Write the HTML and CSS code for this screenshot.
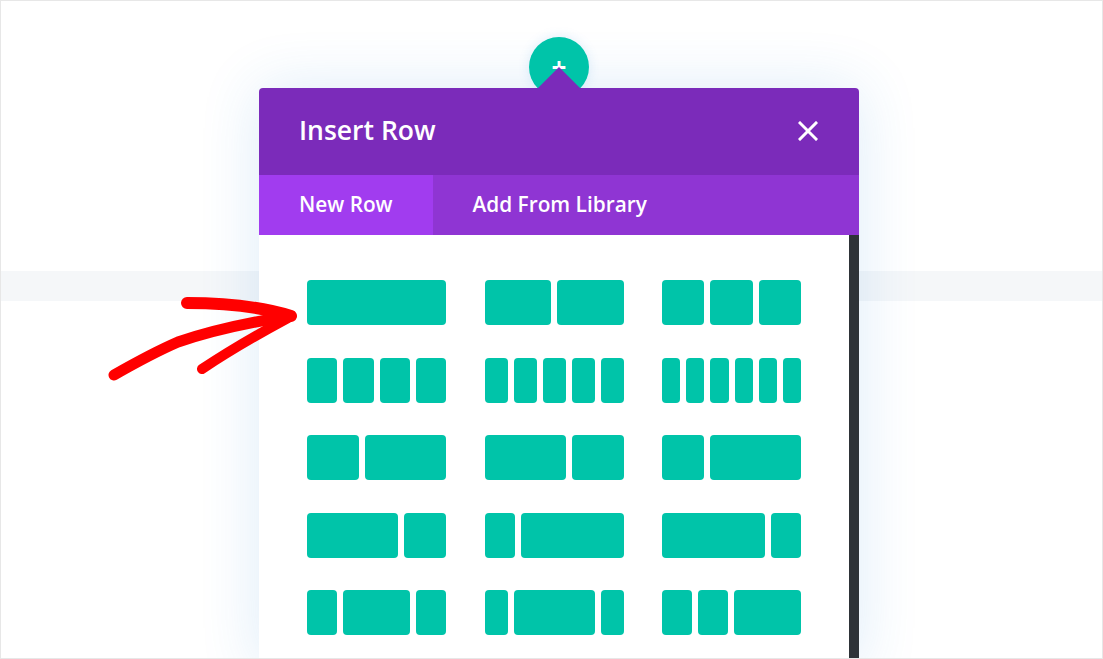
FILE: index.html
```
<!DOCTYPE html>
<html>
<head>
<meta charset="utf-8">
<link rel="stylesheet" href="styles.css">
</head>
<body>
<div class="page">
  <div class="top-area"></div>
  <div class="band"></div>
  <div class="bottom-area"></div>

  <div class="modal">
    <div class="add-btn"><span class="plus">+</span></div>
    <div class="notch"></div>
    <div class="modal-header">
      <h1 class="title">Insert Row</h1>
      <svg class="close" width="20" height="20" viewBox="0 0 20 20"><path d="M2 2 L18 18 M18 2 L2 18" stroke="#fff" stroke-width="3" stroke-linecap="square" fill="none"/></svg>
    </div>
    <div class="tabs">
      <div class="tab active">New Row</div>
      <div class="tab">Add From Library</div>
    </div>
    <div class="body">
      <div class="layouts">
        <div class="layout"><i style="flex:1"></i></div>
        <div class="layout"><i style="flex:1"></i><i style="flex:1"></i></div>
        <div class="layout"><i style="flex:1"></i><i style="flex:1"></i><i style="flex:1"></i></div>

        <div class="layout"><i style="flex:1"></i><i style="flex:1"></i><i style="flex:1"></i><i style="flex:1"></i></div>
        <div class="layout"><i style="flex:1"></i><i style="flex:1"></i><i style="flex:1"></i><i style="flex:1"></i><i style="flex:1"></i></div>
        <div class="layout"><i style="flex:1"></i><i style="flex:1"></i><i style="flex:1"></i><i style="flex:1"></i><i style="flex:1"></i><i style="flex:1"></i></div>

        <div class="layout"><i style="flex:52"></i><i style="flex:81"></i></div>
        <div class="layout"><i style="flex:81"></i><i style="flex:52"></i></div>
        <div class="layout"><i style="flex:42"></i><i style="flex:91"></i></div>

        <div class="layout"><i style="flex:91"></i><i style="flex:42"></i></div>
        <div class="layout"><i style="flex:30"></i><i style="flex:103"></i></div>
        <div class="layout"><i style="flex:103"></i><i style="flex:30"></i></div>

        <div class="layout"><i style="flex:30"></i><i style="flex:67"></i><i style="flex:30"></i></div>
        <div class="layout"><i style="flex:23"></i><i style="flex:81"></i><i style="flex:23"></i></div>
        <div class="layout"><i style="flex:30"></i><i style="flex:30"></i><i style="flex:67"></i></div>
      </div>
      <div class="scrollbar"></div>
    </div>
  </div>

  <svg class="arrow" width="200" height="100" viewBox="100 290 200 100">
    <g fill="none" stroke="#ff0000" stroke-linecap="round" stroke-linejoin="round">
      <path d="M114 375 C 135 363, 155 352, 178 342 C 210 331, 245 323, 290 316" stroke-width="11"/>
      <path d="M187 303 C 222 303, 262 307, 291 316" stroke-width="12"/>
      <path d="M202 369 C 232 349, 262 332, 288 318" stroke-width="10"/>
    </g>
  </svg>
</div>
</body>
</html>
```

FILE: styles.css
```
* { box-sizing: border-box; }
html, body { margin: 0; padding: 0; }
body {
  width: 1103px;
  height: 659px;
  overflow: hidden;
  background: #fff;
  font-family: "Open Sans", "Liberation Sans", sans-serif;
}
.page {
  position: relative;
  width: 1103px;
  height: 659px;
  border: 1px solid #e7e7e7;
  display: flex;
  flex-direction: column;
  overflow: hidden;
}
.top-area { height: 270px; }
.band { height: 30px; background: #f5f7f9; }
.bottom-area { flex: 1; }

.modal {
  position: absolute;
  left: 258px;
  top: 87px;
  width: 600px;
  height: 580px;
  background: #fff;
  border-radius: 4px 4px 0 0;
  box-shadow: 0 0 60px rgba(43, 135, 218, 0.16);
  display: flex;
  flex-direction: column;
}
.add-btn {
  position: absolute;
  z-index: 0;
  left: 270px;
  top: -51px;
  width: 60px;
  height: 60px;
  border-radius: 50%;
  background: #00c4a9;
  box-shadow: 0 0 12px rgba(43, 135, 218, 0.15);
  display: flex;
  align-items: flex-start;
  justify-content: center;
}
.plus {
  color: #fff;
  font-size: 26px;
  font-weight: 700;
  line-height: 1;
  margin-top: 17px;
}
.notch {
  position: absolute;
  z-index: 2;
  left: 278px;
  top: -21px;
  width: 0;
  height: 0;
  border-left: 22px solid transparent;
  border-right: 22px solid transparent;
  border-bottom: 22px solid #7b2bba;
}
.modal-header {
  position: relative;
  z-index: 1;
  height: 87px;
  background: #7b2bba;
  border-radius: 4px 4px 0 0;
  display: flex;
  align-items: center;
  justify-content: space-between;
  padding: 0 41px 0 40px;
}
.title {
  margin: 0;
  color: #fff;
  font-size: 26.5px;
  font-weight: 600;
  line-height: 1;
  margin-bottom: 3px;
}
.close { display: block; margin-bottom: 1px; }
.tabs {
  position: relative;
  z-index: 1;
  height: 60px;
  background: #8f35d3;
  display: flex;
}
.tab {
  color: #fff;
  font-size: 20.8px;
  font-weight: 600;
  padding: 0 40px;
  display: flex;
  align-items: center;
  padding-bottom: 2px;
}
.tab.active { background: #a13cef; }
.body {
  flex: 1;
  display: flex;
}
.layouts {
  flex: 1;
  display: grid;
  grid-template-columns: repeat(3, 139px);
  justify-content: space-between;
  row-gap: 32.5px;
  padding: 45px 48px 0 48px;
  align-content: start;
}
.layout {
  height: 45px;
  display: flex;
  gap: 6px;
}
.layout i {
  display: block;
  flex-basis: 0;
  background: #00c4a9;
  border-radius: 4px;
}
.scrollbar {
  width: 10px;
  background: #2e3338;
}
.arrow {
  position: absolute;
  left: 99px;
  top: 289px;
}
```
